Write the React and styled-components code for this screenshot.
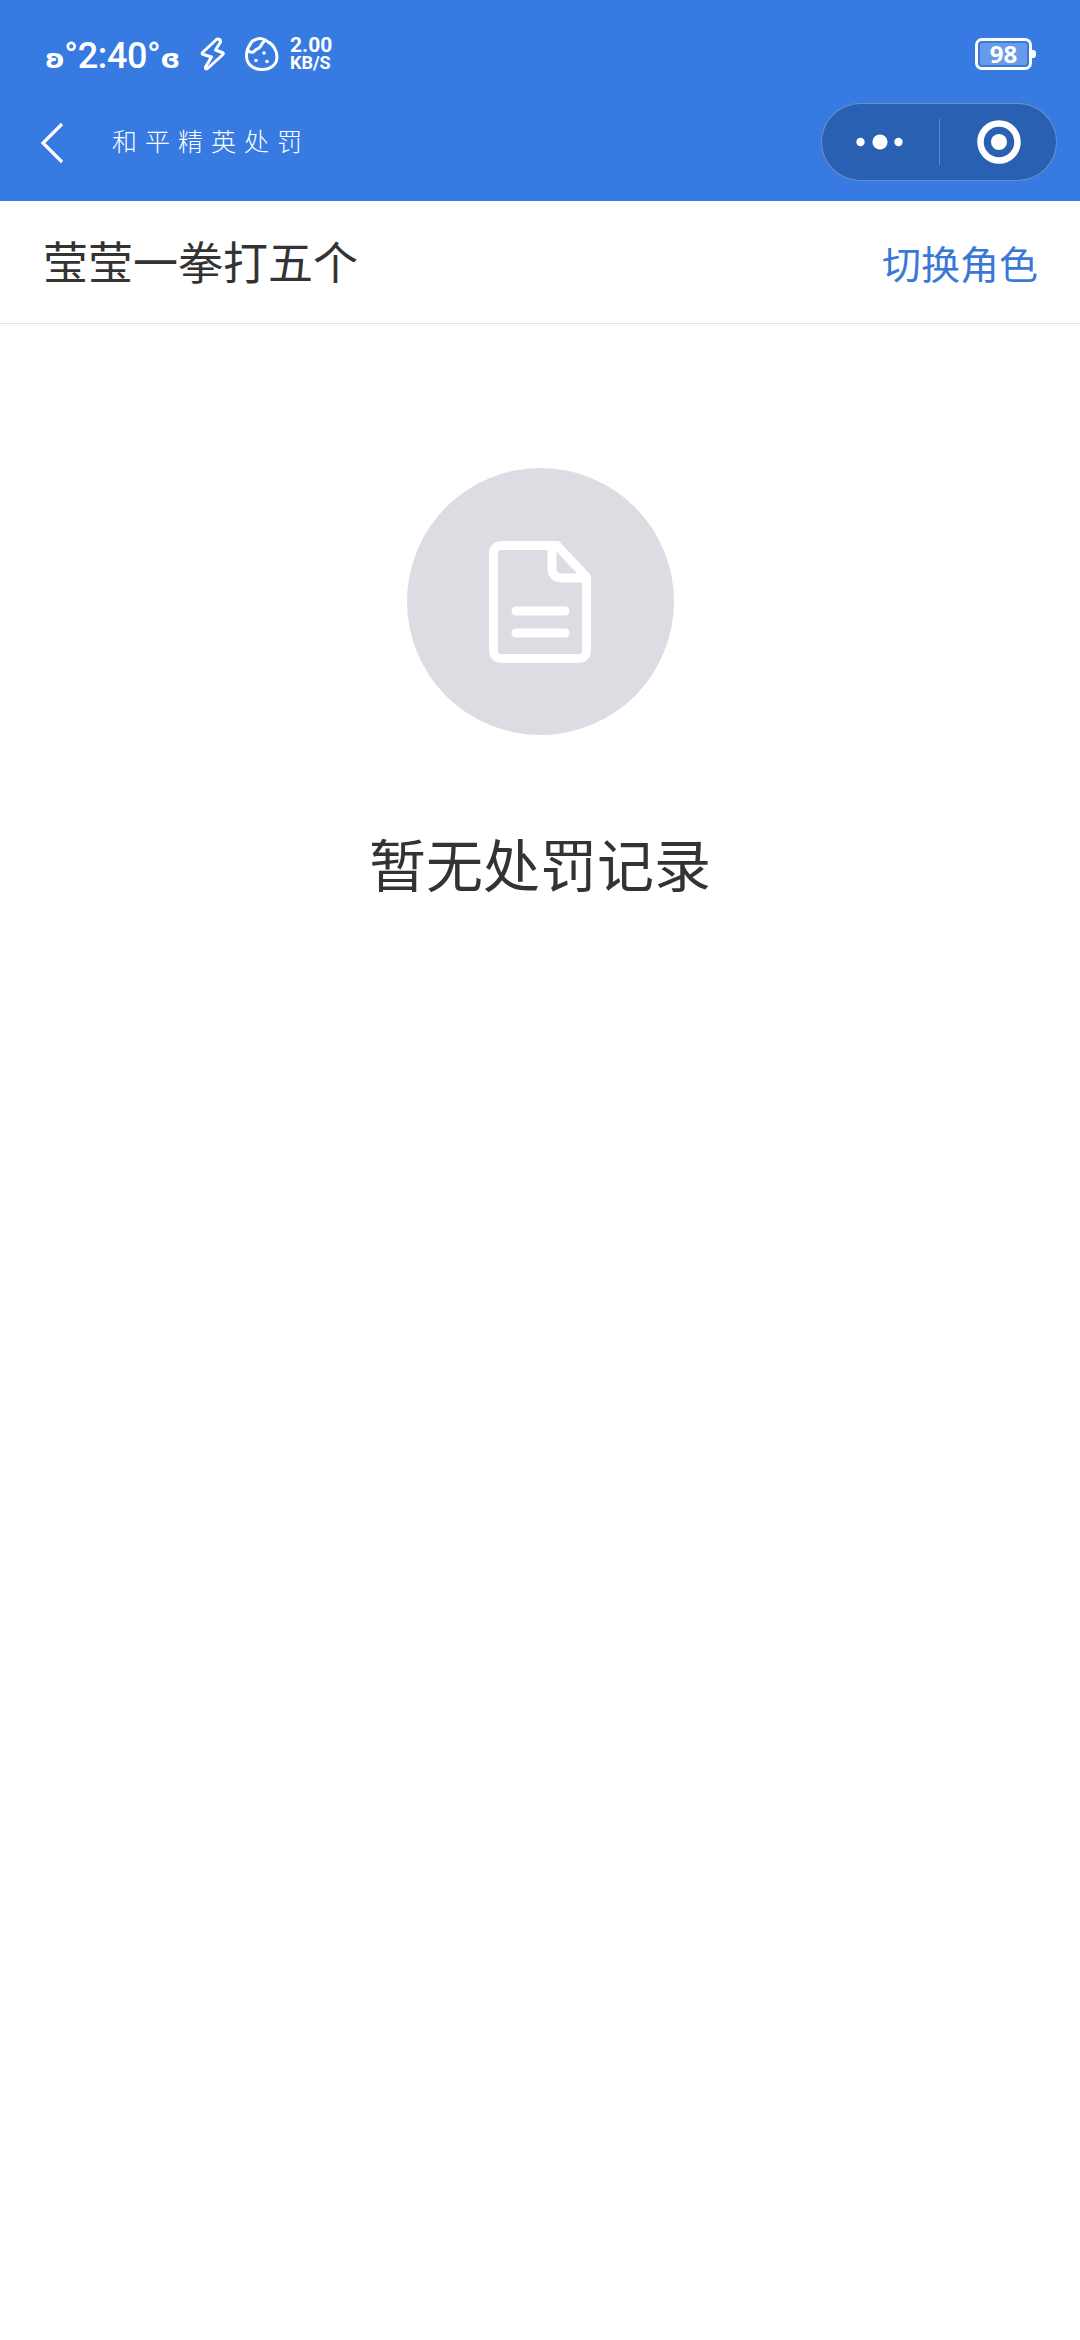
import React from 'react'
import styled, { createGlobalStyle } from 'styled-components'

const GlobalStyle = createGlobalStyle`
  html, body {
    margin: 0;
    padding: 0;
    background: #fff;
  }
  * {
    box-sizing: border-box;
  }
`

const CJK = `"Noto Sans CJK SC", "Liberation Sans", sans-serif`

export default function App() {
  return (
    <Page>
      <GlobalStyle />
      <Header>
        <StatusBar>
          <StatusLeft>
            <Clock>
              <ClockDeco>ʚ</ClockDeco>°2:40°<ClockDeco>ɞ</ClockDeco>
            </Clock>
            <BoltIcon />
            <BerryIcon />
            <NetSpeed>
              <SpeedValue>2.00</SpeedValue>
              <SpeedUnit>KB/S</SpeedUnit>
            </NetSpeed>
          </StatusLeft>
          <Battery>
            <BatteryLevel>98</BatteryLevel>
          </Battery>
        </StatusBar>

        <NavBar>
          <BackIcon />
          <NavTitle>和平精英处罚</NavTitle>
          <Capsule>
            <CapsuleSlot>
              <MoreIcon />
            </CapsuleSlot>
            <CapsuleDivider />
            <CapsuleSlot $inset={3}>
              <RecordIcon />
            </CapsuleSlot>
          </Capsule>
        </NavBar>
      </Header>

      <RoleRow>
        <RoleName>莹莹一拳打五个</RoleName>
        <SwitchRole>切换角色</SwitchRole>
      </RoleRow>

      <Empty>
        <EmptyCircle>
          <FileIcon />
        </EmptyCircle>
        <EmptyText>暂无处罚记录</EmptyText>
      </Empty>
    </Page>
  )
}

const BoltIcon = () => (
  <StatusSvg $gap={20} width="25" height="34" viewBox="0 0 25 34" fill="none">
    <path
      d="M17 2 L2.5 15.5 Q1.5 17 3.5 17.5 L11.5 20 L5.5 30 Q5 33 7.5 31.5 L23 17.5 Q24 16 22 15.5 L15.5 13 L20.5 5 Q21 2 17 2 Z"
      stroke="#fff"
      strokeWidth="3"
      strokeLinejoin="round"
    />
  </StatusSvg>
)

const BerryIcon = () => (
  <StatusSvg $gap={11} width="34" height="34" viewBox="0 0 34 34" fill="none">
    <path
      d="M6 6 C3 10 1.5 14 1.5 19 C1.5 27 8 32.5 17 32.5 C25 32.5 32 28 32 20 C32 14 28 7 23 5 C20 2 15 0.5 11 2.5 C9 3 7 4 6 6 Z"
      stroke="#fff"
      strokeWidth="3"
      strokeLinejoin="round"
    />
    <path
      d="M2.5 13 C5 16 8 16 10 13.5 C12 11 14 12 15.5 9.5 C16.5 8 17 6 19 4.5"
      stroke="#fff"
      strokeWidth="3"
      strokeLinecap="round"
    />
    <circle cx="11" cy="23.5" r="1.8" fill="#fff" />
    <circle cx="19" cy="16" r="1.8" fill="#fff" />
    <circle cx="22" cy="24.5" r="1.8" fill="#fff" />
  </StatusSvg>
)

const BackIcon = () => (
  <BackSvg width="26" height="44" viewBox="0 0 26 44" fill="none">
    <path d="M22 3 L3 22 L22 41" stroke="#fff" strokeWidth="3.2" />
  </BackSvg>
)

const MoreIcon = () => (
  <svg width="48" height="16" viewBox="0 0 48 16">
    <circle cx="4.5" cy="8" r="4.2" fill="#fff" />
    <circle cx="24" cy="8" r="7.6" fill="#fff" />
    <circle cx="42.5" cy="8" r="4.2" fill="#fff" />
  </svg>
)

const RecordIcon = () => (
  <svg width="44" height="44" viewBox="0 0 44 44" fill="none">
    <circle cx="22" cy="22" r="18.5" stroke="#fff" strokeWidth="6.5" />
    <circle cx="22" cy="22" r="8" fill="#fff" />
  </svg>
)

const FileIcon = () => (
  <svg width="102" height="122" viewBox="0 0 102 122" fill="none">
    <path
      d="M13 4.5 H68 L97.5 36 V109 Q97.5 117.5 89 117.5 H13 Q4.5 117.5 4.5 109 V13 Q4.5 4.5 13 4.5 Z"
      stroke="#fff"
      strokeWidth="9"
      strokeLinejoin="round"
    />
    <path d="M63 5 V27 Q63 37 73 37 H97" stroke="#fff" strokeWidth="9" />
    <path
      d="M27 70 H76 M27 92 H76"
      stroke="#fff"
      strokeWidth="9"
      strokeLinecap="round"
    />
  </svg>
)

const Page = styled.div`
  width: 1080px;
  min-height: 2340px;
  background: #fff;
  font-family: ${CJK};
`

const Header = styled.div`
  height: 201px;
  background: #367ae2;
  color: #fff;
`

const StatusBar = styled.div`
  display: flex;
  align-items: center;
  justify-content: space-between;
  height: 103px;
  padding: 4px 48px 0 45px;
`

const StatusLeft = styled.div`
  display: flex;
  align-items: center;
`

const StatusSvg = styled.svg`
  flex: none;
  margin-right: ${props => props.$gap}px;
`

const Clock = styled.div`
  flex: none;
  width: 155px;
  margin-top: 4px;
  font-family: Roboto, "DejaVu Sans", sans-serif;
  font-size: 36px;
  font-weight: 500;
  letter-spacing: -0.4px;
  white-space: nowrap;
`

const ClockDeco = styled.span`
  font-family: "DejaVu Sans", sans-serif;
  font-size: 27px;
  font-weight: 700;
`

const NetSpeed = styled.div`
  display: flex;
  flex-direction: column;
  font-family: Roboto, sans-serif;
  font-weight: 700;
`

const SpeedValue = styled.div`
  font-size: 21px;
  line-height: 19px;
`

const SpeedUnit = styled.div`
  font-size: 18px;
  line-height: 16px;
`

const Battery = styled.div`
  position: relative;
  display: flex;
  width: 57px;
  height: 32px;
  padding: 2px;
  border: 3px solid #fff;
  border-radius: 7px;

  &::after {
    content: '';
    position: absolute;
    right: -7px;
    top: 9px;
    width: 4px;
    height: 8px;
    border-radius: 0 3px 3px 0;
    background: #fff;
  }
`

const BatteryLevel = styled.div`
  flex: 1;
  border-radius: 2px;
  background: rgba(255, 255, 255, 0.25);
  font-family: "Open Sans", sans-serif;
  font-size: 24px;
  font-weight: 700;
  line-height: 22px;
  text-align: center;
`

const NavBar = styled.div`
  display: flex;
  align-items: center;
  height: 78px;
  padding: 0 23px 0 40px;
`

const BackSvg = styled.svg`
  flex: none;
  margin-top: 1px;
`

const NavTitle = styled.div`
  flex: 1;
  margin: -5px 0 0 46px;
  font-size: 25px;
  font-weight: 300;
  letter-spacing: 8px;
`

const Capsule = styled.div`
  display: flex;
  align-items: center;
  width: 236px;
  height: 78px;
  border: 1.5px solid rgba(255, 255, 255, 0.3);
  border-radius: 39px;
  background: #2a60b1;
`

const CapsuleSlot = styled.div`
  display: flex;
  flex: 1 1 50%;
  align-items: center;
  justify-content: center;
  padding-left: ${props => props.$inset || 0}px;
`

const CapsuleDivider = styled.div`
  flex: none;
  width: 1px;
  height: 46px;
  background: rgba(255, 255, 255, 0.25);
`

const RoleRow = styled.div`
  display: flex;
  align-items: center;
  justify-content: space-between;
  height: 123px;
  padding: 0 42px 0 43px;
  border-bottom: 1px solid #e3e3e3;
`

const RoleName = styled.div`
  color: #333;
  font-size: 45px;
  margin-top: -4px;
`

const SwitchRole = styled.div`
  color: #3a78d6;
  font-size: 39px;
`

const Empty = styled.div`
  display: flex;
  flex-direction: column;
  align-items: center;
  padding-top: 144px;
`

const EmptyCircle = styled.div`
  display: flex;
  align-items: center;
  justify-content: center;
  width: 267px;
  height: 267px;
  border-radius: 50%;
  background: #dcdde3;
`

const EmptyText = styled.div`
  margin-top: 85px;
  color: #333;
  font-size: 57px;
  line-height: 84px;
`
